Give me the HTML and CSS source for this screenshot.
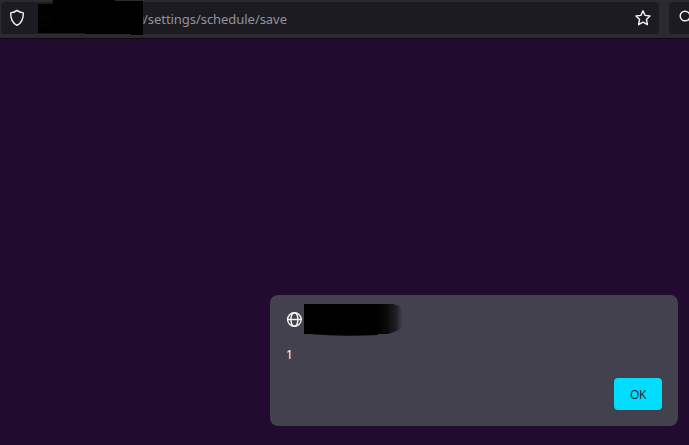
FILE: index.html
```html
<!DOCTYPE html>
<html lang="en">
<head>
<meta charset="utf-8">
<title>Schedule</title>
<link rel="stylesheet" href="styles.css">
</head>
<body>
<header class="toolbar">
  <div class="urlbar">
    <svg class="shield" width="16" height="18" viewBox="0 0 16 18"><path d="M8 1.4 C6.3 2.8 4 3.6 1.7 3.9 C1.5 9.5 3.1 13.8 8 16.3 C12.9 13.8 14.5 9.5 14.3 3.9 C12 3.6 9.7 2.8 8 1.4Z"/></svg>
    <svg class="host-mask" width="106" height="37" viewBox="0 0 106 37"><path d="M0 4H15V0H77V1H105V35H93V34H47V33H0Z"/><path class="lock" d="M4 17H12V25H4ZM5.5 17V14Q8 10 10.500 14V17"/><path class="edge" d="M105.500 17V22"/></svg>
    <span class="path">/settings/schedule/save</span>
    <svg class="star" width="18" height="18" viewBox="0 0 18 18"><path d="M9 1.8 L11.1 6.400 L16 7 L12.400 10.4 L13.4 15.7 L9 13.2 L4.6 15.7 L5.6 10.4 L2 7 L6.9 6.4Z"/></svg>
  </div>
  <div class="searchbar">
    <svg class="search" width="16" height="16" viewBox="0 0 16 16"><circle cx="6" cy="6" r="4.8"/><path d="M9.5 9.5L14.5 14.5"/></svg>
  </div>
</header>
<main class="page">
  <section class="dialog">
    <div class="origin">
      <svg class="globe" width="16" height="16" viewBox="0 0 16 16"><circle cx="8.4" cy="7.5" r="6.8"/><ellipse cx="8.4" cy="7.5" rx="3.500" ry="6.8"/><path d="M1.6 7.5H15.2"/></svg>
      <svg class="origin-mask" width="100" height="34" viewBox="0 0 100 34">
        <defs><linearGradient id="fade"><stop offset="0" stop-color="#000"/><stop offset=".35" stop-color="#000" stop-opacity=".85"/><stop offset=".72" stop-color="#08080a" stop-opacity=".6"/><stop offset="1" stop-color="#18181c" stop-opacity="0"/></linearGradient></defs>
        <path d="M0 1H74V32Q38 34 5 31H0Z"/>
        <path fill="url(#fade)" d="M74 1H89L96 3L98 10L99 20L97 26L90 29L84 31H74Z"/>
      </svg>
    </div>
    <p class="message">1</p>
    <button class="ok">OK</button>
  </section>
</main>
</body>
</html>
```
FILE: styles.css
```css
* { box-sizing: border-box; }
body {
  margin: 0;
  width: 689px;
  height: 445px;
  display: flex;
  flex-direction: column;
  overflow: hidden;
  background: #210b2f;
  font-family: "Noto Sans", "Open Sans", sans-serif;
}
svg { display: block; flex: none; overflow: visible; }
.toolbar {
  height: 39px;
  flex: none;
  display: flex;
  gap: 10px;
  padding: 2px 0 0 1px;
  background: #2b2a33;
  border-bottom: 1px solid #0c0c0d;
}
.urlbar {
  width: 658px;
  height: 32px;
  flex: none;
  display: flex;
  align-items: center;
  padding: 0 7px 0 8px;
  border-radius: 4px;
  background: #1c1b22;
}
.shield, .star, .search, .globe {
  fill: none;
  stroke: #f4f4f7;
  stroke-width: 1.4;
  stroke-linejoin: round;
  stroke-linecap: round;
}
.host-mask { margin-left: 13px; margin-right: -1px; }
.lock { fill: none; stroke: #0c0406; }
.edge { fill: none; stroke: #5c3830; }
.path {
  flex: 1;
  padding-top: 2px;
  color: #94939a;
  font-size: 13px;
  line-height: 18px;
  letter-spacing: -0.05px;
  white-space: nowrap;
}
.searchbar {
  width: 40px;
  height: 32px;
  flex: none;
  padding: 8px 0 0 10px;
  border-radius: 4px;
  background: #1c1b22;
}
.page {
  flex: 1;
  display: flex;
  align-items: flex-end;
  justify-content: flex-end;
  padding: 0 11px 19px 0;
}
.dialog {
  width: 408px;
  height: 131px;
  display: flex;
  flex-direction: column;
  padding: 8px 16px 16px;
  border-radius: 8px;
  background: #42414d;
  color: #fbfbfe;
}
.origin { display: flex; align-items: center; gap: 2px; height: 34px; }
.message { margin: 9px 0 0; font-size: 12px; line-height: 18px; }
.ok {
  width: 48px;
  height: 32px;
  margin-top: auto;
  align-self: flex-end;
  padding: 0;
  border: 0;
  border-radius: 4px;
  background: #00ddff;
  color: #2b2a33;
  font: 12px "Noto Sans", "Open Sans", sans-serif;
  letter-spacing: -0.3px;
}
```
